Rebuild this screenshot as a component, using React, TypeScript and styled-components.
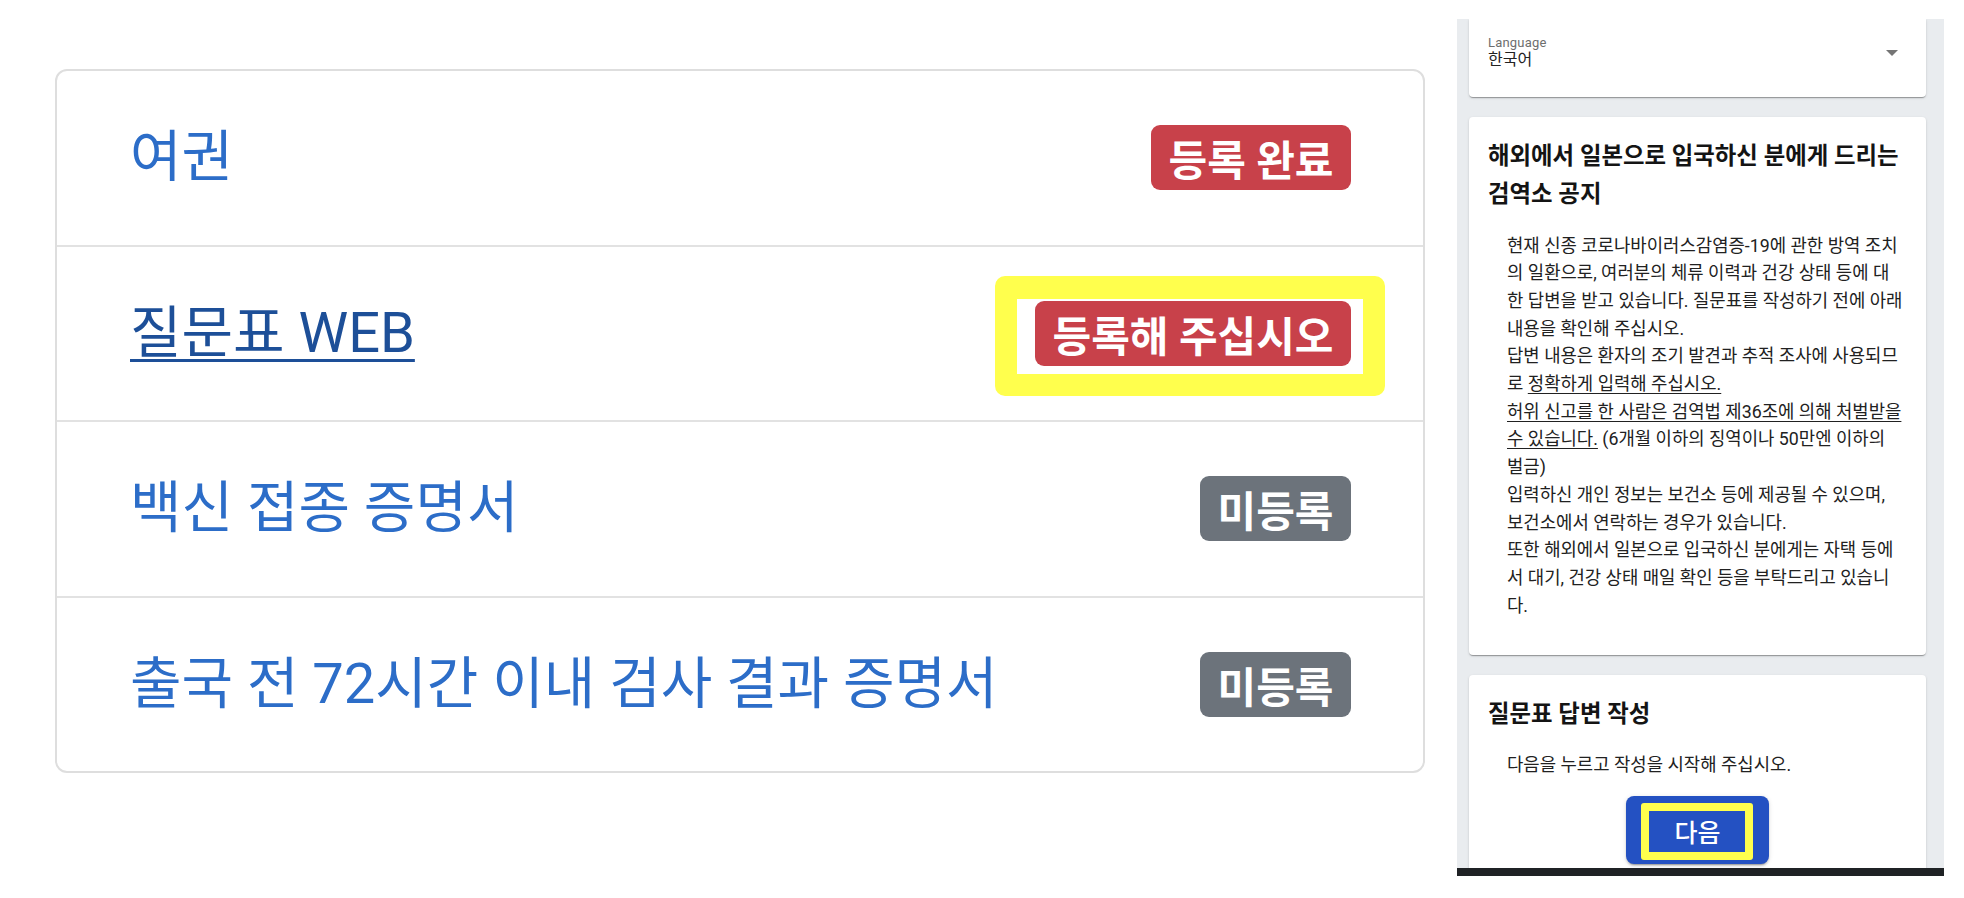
import React from 'react';
import styled, { createGlobalStyle } from 'styled-components';

const GlobalStyle = createGlobalStyle`
  html, body { margin: 0; padding: 0; background: #ffffff; }
  body { font-family: Roboto, "Noto Sans CJK KR", "Noto Sans", sans-serif; }
  * { box-sizing: border-box; }
`;

const Page = styled.div`
  display: flex;
  align-items: flex-start;
  gap: 32px;
  width: 1964px;
  height: 898px;
  padding-left: 55px;
  overflow: hidden;
`;

/* ---------- left: document list ---------- */

const DocCard = styled.div`
  margin-top: 69px;
  width: 1370px;
  display: flex;
  flex-direction: column;
  border: 2px solid #dedede;
  border-radius: 12px;
  background: #fff;
`;

const DocRow = styled.div`
  display: flex;
  align-items: center;
  justify-content: space-between;
  height: 173.5px;
  padding: 0 72px 0 73px;
  box-sizing: content-box;
  & + & { border-top: 2px solid #e2e2e2; }
`;

const DocTitle = styled.a<{ $visited?: boolean }>`
  font-size: 56px;
  line-height: 1.2;
  font-weight: 400;
  color: ${(p) => (p.$visited ? '#1d4f98' : '#2c6dc8')};
  text-decoration: ${(p) => (p.$visited ? 'underline' : 'none')};
  text-decoration-thickness: 3px;
  text-underline-offset: 7px;
  white-space: nowrap;
`;

const Badge = styled.span<{ $tone: 'danger' | 'secondary' }>`
  display: inline-flex;
  align-items: center;
  height: 65px;
  padding: 0 17.5px;
  border-radius: 9px;
  background: ${(p) => (p.$tone === 'danger' ? '#c8414a' : '#6c737b')};
  color: #fff;
  font-size: 42px;
  font-weight: 700;
  white-space: nowrap;
`;

const Highlighted = styled.span`
  position: relative;
  display: inline-flex;
  isolation: isolate;
`;

const HighlightFrame = styled.span`
  position: absolute;
  top: -25px;
  bottom: -30px;
  left: -40px;
  right: -34px;
  border: 22px solid #ffff4d;
  border-top-width: 23px;
  border-radius: 10px;
  background: #fff;
  z-index: -1;
`;

/* ---------- right: side panel ---------- */

const SidePanel = styled.aside`
  margin-top: 19px;
  width: 487px;
  height: 857px;
  display: flex;
  flex-direction: column;
  background: #e9ecef;
`;

const SideScroll = styled.div`
  flex: 1;
  min-height: 0;
  overflow: hidden;
  display: flex;
  flex-direction: column;
  gap: 19.5px;
  padding: 0 18px 0 12px;
`;

const NavBar = styled.div`
  height: 8px;
  flex-shrink: 0;
  background: #1f2225;
`;

const Paper = styled.section<{ $flatTop?: boolean }>`
  flex-shrink: 0;
  background: #fff;
  border-radius: ${(p) => (p.$flatTop ? '0 0 4px 4px' : '4px')};
  box-shadow: 0 2px 1px -1px rgba(0, 0, 0, 0.2), 0 1px 1px 0 rgba(0, 0, 0, 0.14),
    0 1px 3px 0 rgba(0, 0, 0, 0.12);
`;

const SelectCard = styled(Paper)`
  height: 78px;
  padding: 16px 28px 0 19px;
`;

const SelectField = styled.div`
  display: flex;
  align-items: center;
  justify-content: space-between;
`;

const SelectText = styled.div`
  display: flex;
  flex-direction: column;
`;

const SelectLabel = styled.span`
  font-size: 13px;
  line-height: 15px;
  color: #6e6e6e;
  letter-spacing: 0.2px;
`;

const SelectValue = styled.span`
  font-size: 16px;
  line-height: 20px;
  color: #222;
`;

const NoticeCard = styled(Paper)<{ $bottom: number }>`
  padding: 20px 19px ${(p) => p.$bottom}px 19px;
`;

const CardTitle = styled.h2`
  margin: 0;
  font-size: 23.4px;
  line-height: 38px;
  font-weight: 700;
  color: #141414;
`;

const CardBody = styled.p<{ $gap: number }>`
  margin: ${(p) => p.$gap}px 0 0 0;
  padding: 0 3px 0 19px;
  font-size: 17.8px;
  line-height: 27.7px;
  color: #212121;
`;

const Under = styled.span`
  text-decoration: underline;
  text-underline-offset: 3px;
`;

const ButtonRow = styled.div`
  display: flex;
  justify-content: center;
  margin-top: 17px;
`;

const NextButton = styled.button`
  position: relative;
  width: 143px;
  height: 68px;
  border: none;
  border-radius: 8px;
  background: #2451c2;
  color: #fff;
  font-family: inherit;
  font-size: 25px;
  font-weight: 500;
  box-shadow: 0 3px 1px -2px rgba(0, 0, 0, 0.2), 0 2px 2px 0 rgba(0, 0, 0, 0.14),
    0 1px 5px 0 rgba(0, 0, 0, 0.12);
  cursor: pointer;
`;

const ButtonFrame = styled.span`
  position: absolute;
  top: 7px;
  bottom: 4px;
  left: 15px;
  right: 16px;
  border: 8px solid #ffff4d;
  border-radius: 3px;
  pointer-events: none;
`;

const ButtonLabel = styled.span`
  position: relative;
  top: 1px;
`;

type Doc = { title: string; status: string; tone: 'danger' | 'secondary'; visited?: boolean; highlight?: boolean };

const docs: Doc[] = [
  { title: '여권', status: '등록 완료', tone: 'danger' },
  { title: '질문표 WEB', status: '등록해 주십시오', tone: 'danger', visited: true, highlight: true },
  { title: '백신 접종 증명서', status: '미등록', tone: 'secondary' },
  { title: '출국 전 72시간 이내 검사 결과 증명서', status: '미등록', tone: 'secondary' },
];

export default function App() {
  return (
    <>
      <GlobalStyle />
      <Page>
        <DocCard>
          {docs.map((d) => (
            <DocRow key={d.title}>
              <DocTitle $visited={d.visited}>{d.title}</DocTitle>
              {d.highlight ? (
                <Highlighted>
                  <HighlightFrame />
                  <Badge $tone={d.tone}>{d.status}</Badge>
                </Highlighted>
              ) : (
                <Badge $tone={d.tone}>{d.status}</Badge>
              )}
            </DocRow>
          ))}
        </DocCard>

        <SidePanel>
          <SideScroll>
            <SelectCard $flatTop>
              <SelectField>
                <SelectText>
                  <SelectLabel>Language</SelectLabel>
                  <SelectValue>한국어</SelectValue>
                </SelectText>
                <svg width="12" height="6" viewBox="0 0 12 6" aria-hidden="true">
                  <polygon points="0,0 12,0 6,6" fill="#757575" />
                </svg>
              </SelectField>
            </SelectCard>

            <NoticeCard $bottom={36}>
              <CardTitle>해외에서 일본으로 입국하신 분에게 드리는 검역소 공지</CardTitle>
              <CardBody $gap={19}>
                현재 신종 코로나바이러스감염증-19에 관한 방역 조치의 일환으로, 여러분의 체류 이력과 건강 상태 등에 대한 답변을 받고 있습니다. 질문표를 작성하기 전에 아래 내용을 확인해 주십시오.
                <br />
                답변 내용은 환자의 조기 발견과 추적 조사에 사용되므로 <Under>정확하게 입력해 주십시오.</Under>
                <br />
                <Under>허위 신고를 한 사람은 검역법 제36조에 의해 처벌받을 수 있습니다.</Under> (6개월 이하의 징역이나 50만엔 이하의 벌금)
                <br />
                입력하신 개인 정보는 보건소 등에 제공될 수 있으며, 보건소에서 연락하는 경우가 있습니다.
                <br />
                또한 해외에서 일본으로 입국하신 분에게는 자택 등에서 대기, 건강 상태 매일 확인 등을 부탁드리고 있습니다.
              </CardBody>
            </NoticeCard>

            <NoticeCard $bottom={24}>
              <CardTitle>질문표 답변 작성</CardTitle>
              <CardBody $gap={18}>다음을 누르고 작성을 시작해 주십시오.</CardBody>
              <ButtonRow>
                <NextButton type="button">
                  <ButtonFrame />
                  <ButtonLabel>다음</ButtonLabel>
                </NextButton>
              </ButtonRow>
            </NoticeCard>
          </SideScroll>
          <NavBar />
        </SidePanel>
      </Page>
    </>
  );
}
